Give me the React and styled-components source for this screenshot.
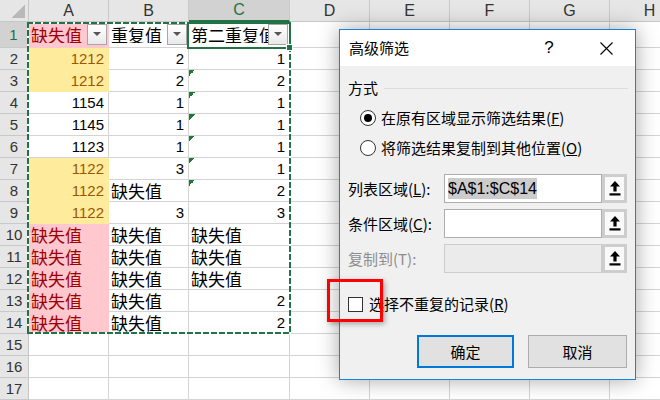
import React from 'react'
import styled, { createGlobalStyle, css } from 'styled-components'

const GlobalStyle = createGlobalStyle`
  html, body {
    margin: 0;
    padding: 0;
    background: #fff;
    overflow: hidden;
  }
  body {
    font-family: "Liberation Sans", "Noto Sans CJK SC", sans-serif;
  }
`

const fills = {
  pink: { bg: '#ffc7ce', fg: '#9c0006' },
  yellow: { bg: '#ffeb9c', fg: '#9c5700' },
}

const GREEN = '#217346'

const Page = styled.div`
  position: relative;
  width: 660px;
  height: 400px;
  overflow: hidden;
`

const Sheet = styled.div`
  display: grid;
  grid-template-columns: 29px 80px 80px 101px 80px 80px 80px 80px 80px;
  grid-template-rows: 22px 26px repeat(16, 22px);
`

const Corner = styled.div`
  grid-row: 1;
  grid-column: 1;
  box-sizing: border-box;
  background: #e6e6e6;
  border-right: 1px solid #c6c6c6;
  border-bottom: 1px solid #c6c6c6;
  display: flex;
  justify-content: flex-end;
  align-items: flex-end;
  padding: 0 3px 3px 0;

  &::after {
    content: '';
    width: 13px;
    height: 13px;
    background: linear-gradient(to top left, #b9b9b9 50%, transparent 50%);
  }
`

const ColHead = styled.div`
  grid-row: 1;
  grid-column: ${p => p.$c};
  box-sizing: border-box;
  background: ${p => (p.$active ? '#d2d2d2' : '#e6e6e6')};
  color: ${p => (p.$active ? GREEN : '#333')};
  border-right: 1px solid #c9c9c9;
  border-bottom: ${p => (p.$active ? `2px solid ${GREEN}` : '1px solid #c6c6c6')};
  font-size: 16px;
  line-height: 1;
  display: flex;
  align-items: center;
  justify-content: center;
`

const RowHead = styled.div`
  grid-row: ${p => p.$r};
  grid-column: 1;
  box-sizing: border-box;
  background: ${p => (p.$active ? '#d2d2d2' : '#e6e6e6')};
  color: ${p => (p.$active ? GREEN : '#333')};
  border-right: ${p => (p.$active ? `2px solid ${GREEN}` : '1px solid #c6c6c6')};
  border-bottom: 1px solid #c9c9c9;
  font-size: 15px;
  line-height: 1;
  display: flex;
  align-items: center;
  justify-content: center;
`

const Cell = styled.div`
  grid-row: ${p => p.$r};
  grid-column: ${p => p.$c};
  position: relative;
  box-sizing: border-box;
  min-width: 0;
  border-right: 1px solid ${p => (fills[p.$fill] ? fills[p.$fill].bg : '#d4d4d4')};
  border-bottom: 1px solid ${p => (fills[p.$fill] ? fills[p.$fill].bg : '#d4d4d4')};
  background: ${p => (fills[p.$fill] ? fills[p.$fill].bg : '#fff')};
  color: ${p => (fills[p.$fill] ? fills[p.$fill].fg : '#000')};
  display: flex;
  align-items: center;
  justify-content: ${p => (p.$num ? 'flex-end' : 'flex-start')};
  padding: ${p => (p.$head ? '0 0 0 2px' : '0 4px 0 2px')};
  white-space: nowrap;
  overflow: hidden;
  line-height: 1;
  font-family: ${p => (p.$num ? '"Liberation Sans", sans-serif' : '"Noto Sans CJK SC", sans-serif')};
  font-size: ${p => (p.$num ? '15px' : '17px')};

  ${p =>
    p.$tri &&
    css`
      &::before {
        content: '';
        position: absolute;
        left: 0;
        top: 0;
        width: 6px;
        height: 6px;
        background: linear-gradient(135deg, #1e7b34 50%, transparent 50%);
      }
    `}
`

const HeadLabel = styled.span`
  flex: 1;
  min-width: 0;
  overflow: hidden;
`

const DropBtn = styled.div`
  flex: none;
  width: 20px;
  height: 21px;
  margin: -1px 1px 0 0;
  box-sizing: border-box;
  border: 1px solid #a6a6a6;
  background: linear-gradient(#ffffff, #e9e9e9);
  display: flex;
  align-items: center;
  justify-content: center;

  &::after {
    content: '';
    border-left: 4px solid transparent;
    border-right: 4px solid transparent;
    border-top: 4px solid #555;
  }
`

const Marquee = styled.div`
  grid-row: 2 / 16;
  grid-column: 2 / 5;
  margin: 0 -1px 0 -2px;
  position: relative;
  z-index: 2;
  pointer-events: none;
  background:
    repeating-linear-gradient(90deg, ${GREEN} 0 6px, #fff 6px 8px) top / 100% 2px no-repeat,
    repeating-linear-gradient(90deg, ${GREEN} 0 6px, #fff 6px 8px) bottom / 100% 2px no-repeat,
    repeating-linear-gradient(180deg, ${GREEN} 0 6px, #fff 6px 8px) left / 2px 100% no-repeat,
    repeating-linear-gradient(180deg, ${GREEN} 0 6px, #fff 6px 8px) right / 2px 100% no-repeat;
`

const ActiveCell = styled.div`
  grid-row: 2;
  grid-column: 4;
  margin: 0 -1px -1px -2px;
  position: relative;
  z-index: 3;
  border: 2px solid ${GREEN};
  pointer-events: none;
`

const FillHandle = styled.div`
  position: absolute;
  right: -4px;
  bottom: -4px;
  width: 5px;
  height: 5px;
  background: ${GREEN};
  border: 1px solid #fff;
`

/* dialog */

const Dialog = styled.div`
  position: absolute;
  left: 339px;
  top: 29px;
  width: 297px;
  height: 351px;
  box-sizing: border-box;
  border: 1px solid #1883d7;
  background: #f0f0f0;
  box-shadow: 0 0 20px rgba(0, 0, 0, 0.35);
  display: flex;
  flex-direction: column;
  font-family: "Noto Sans CJK SC", "Liberation Sans", sans-serif;
  font-size: 15px;
  line-height: 1.2;
  color: #000;
  z-index: 5;
`

const TitleBar = styled.div`
  height: 36px;
  flex: none;
  background: #fff;
  display: flex;
  align-items: center;
  padding-left: 9px;
`

const Title = styled.div`
  flex: 1;
`

const TitleBtn = styled.div`
  width: ${p => p.$w}px;
  margin-right: ${p => p.$mr}px;
  display: flex;
  justify-content: center;
  align-items: center;
  font-family: "Liberation Sans", sans-serif;
  font-size: 17px;
`

const Body = styled.div`
  display: flex;
  flex-direction: column;
  padding: 0 8px 0 8px;
`

const GroupHead = styled.div`
  margin-top: 12px;
  height: 20px;
  display: flex;
  align-items: center;

  &::after {
    content: '';
    flex: 1;
    height: 1px;
    margin: 0 -1px 0 6px;
    background: #dcdcdc;
  }
`

const RadioRow = styled.div`
  height: 30px;
  margin-left: 12px;
  margin-top: ${p => p.$mt || 0}px;
  display: flex;
  align-items: center;
  gap: 5px;
`

const RadioDot = styled.div`
  width: 16px;
  height: 16px;
  box-sizing: border-box;
  border-radius: 50%;
  border: 1px solid #333;
  background: #fff;
  display: flex;
  align-items: center;
  justify-content: center;

  ${p =>
    p.$on &&
    css`
      &::after {
        content: '';
        width: 8px;
        height: 8px;
        border-radius: 50%;
        background: #000;
      }
    `}
`

const FieldRow = styled.div`
  height: 29px;
  margin-top: ${p => p.$mt}px;
  display: flex;
  align-items: center;
`

const FieldLabel = styled.div`
  width: 96px;
  color: ${p => (p.$disabled ? '#8d8d8d' : '#000')};
`

const FieldInput = styled.div`
  width: 158px;
  height: 29px;
  box-sizing: border-box;
  border: 1px solid ${p => (p.$disabled ? '#cccccc' : '#adadad')};
  background: ${p => (p.$disabled ? '#ebebeb' : '#fff')};
  display: flex;
  align-items: center;
  padding-left: 3px;
  font-family: "Liberation Sans", sans-serif;
  font-size: 16px;
`

const Selected = styled.span`
  background: #cccccc;
  padding: 1px 0;
`

const PickBtn = styled.div`
  width: 25px;
  height: 29px;
  box-sizing: border-box;
  border: 3px solid #cdcdcd;
  background: #f9f9f9;
  display: flex;
  align-items: center;
  justify-content: center;
`

const CheckRow = styled.div`
  height: 20px;
  margin-top: 21px;
  display: flex;
  align-items: center;
  gap: 6px;
`

const CheckBox = styled.div`
  width: 15px;
  height: 15px;
  box-sizing: border-box;
  border: 1px solid #333;
  background: #fff;
`

const ButtonRow = styled.div`
  margin-top: 21px;
  display: flex;
  justify-content: flex-end;
  gap: 14px;
`

const Button = styled.div`
  width: ${p => p.$w}px;
  height: 33px;
  box-sizing: border-box;
  background: #e1e1e1;
  border: ${p => (p.$primary ? '2px solid #0078d7' : '1px solid #adadad')};
  display: flex;
  align-items: center;
  justify-content: center;
`

const Callout = styled.div`
  position: absolute;
  left: 327px;
  top: 279px;
  width: 56px;
  height: 43px;
  box-sizing: border-box;
  border: 3px solid #ff0000;
  box-shadow: 2px 2px 5px rgba(0, 0, 0, 0.3);
  z-index: 6;
`

const CloseIcon = () => (
  <svg width="13" height="13" viewBox="0 0 13 13">
    <path d="M0.5 0.5 L12.5 12.5 M12.5 0.5 L0.5 12.5" stroke="#000" strokeWidth="1.1" fill="none" />
  </svg>
)

const PickIcon = () => (
  <svg width="12" height="15" viewBox="0 0 12 15">
    <polygon points="6,0 11,5.5 7.6,5.5 7.6,10.5 4.4,10.5 4.4,5.5 1,5.5" fill="#000" />
    <rect x="0.5" y="12.3" width="11" height="2.2" fill="#000" />
  </svg>
)

const n = (v, extra) => ({ v, num: true, ...extra })
const t = (v, extra) => ({ v, ...extra })
const miss = extra => t('缺失值', extra)

const colA = [
  n('1212', { fill: 'yellow' }), n('1212', { fill: 'yellow' }), n('1154'), n('1145'), n('1123'),
  n('1122', { fill: 'yellow' }), n('1122', { fill: 'yellow' }), n('1122', { fill: 'yellow' }),
  miss({ fill: 'pink' }), miss({ fill: 'pink' }), miss({ fill: 'pink' }), miss({ fill: 'pink' }), miss({ fill: 'pink' }),
]
const colB = [
  n('2'), n('2'), n('1'), n('1'), n('1'), n('3'), miss(), n('3'),
  miss(), miss(), miss(), miss(), miss(),
]
const colC = [
  n('1'), n('2', { tri: true }), n('1', { tri: true }), n('1', { tri: true }), n('1', { tri: true }),
  n('1', { tri: true }), n('2', { tri: true }), n('3'),
  miss(), miss(), miss(), n('2'), n('2'),
]

const columns = ['A', 'B', 'C', 'D', 'E', 'F', 'G', 'H']
const headers = [
  { v: '缺失值', fill: 'pink' },
  { v: '重复值' },
  { v: '第二重复值' },
]

const App = () => {
  const cells = []
  // header row (sheet row 1)
  headers.forEach((h, i) => {
    cells.push(
      <Cell key={`h${i}`} $r={2} $c={i + 2} $fill={h.fill} $head>
        <HeadLabel>{h.v}</HeadLabel>
        <DropBtn />
      </Cell>
    )
  })
  ;[colA, colB, colC].forEach((col, ci) => {
    col.forEach((d, ri) => {
      cells.push(
        <Cell key={`c${ci}-${ri}`} $r={ri + 3} $c={ci + 2} $fill={d.fill} $num={d.num} $tri={d.tri}>
          {d.v}
        </Cell>
      )
    })
    for (let r = 15; r <= 17; r++) {
      cells.push(<Cell key={`e${ci}-${r}`} $r={r + 1} $c={ci + 2} />)
    }
  })
  for (let c = 5; c <= 9; c++) {
    for (let r = 1; r <= 17; r++) {
      cells.push(<Cell key={`x${c}-${r}`} $r={r + 1} $c={c} />)
    }
  }

  return (
    <Page>
      <GlobalStyle />
      <Sheet>
        <Corner />
        {columns.map((c, i) => (
          <ColHead key={c} $c={i + 2} $active={c === 'C'}>{c}</ColHead>
        ))}
        {Array.from({ length: 17 }, (_, i) => (
          <RowHead key={i} $r={i + 2} $active={i === 0}>{i + 1}</RowHead>
        ))}
        {cells}
        <Marquee />
        <ActiveCell>
          <FillHandle />
        </ActiveCell>
      </Sheet>

      <Dialog>
        <TitleBar>
          <Title>高级筛选</Title>
          <TitleBtn $w={40} $mr={16}>?</TitleBtn>
          <TitleBtn $w={42} $mr={8}><CloseIcon /></TitleBtn>
        </TitleBar>
        <Body>
          <GroupHead>方式</GroupHead>
          <RadioRow $mt={5}>
            <RadioDot $on />
            <span>在原有区域显示筛选结果(<u>F</u>)</span>
          </RadioRow>
          <RadioRow>
            <RadioDot />
            <span>将筛选结果复制到其他位置(<u>O</u>)</span>
          </RadioRow>
          <FieldRow $mt={11}>
            <FieldLabel>列表区域(<u>L</u>):</FieldLabel>
            <FieldInput><Selected>$A$1:$C$14</Selected></FieldInput>
            <PickBtn><PickIcon /></PickBtn>
          </FieldRow>
          <FieldRow $mt={6}>
            <FieldLabel>条件区域(<u>C</u>):</FieldLabel>
            <FieldInput />
            <PickBtn><PickIcon /></PickBtn>
          </FieldRow>
          <FieldRow $mt={6}>
            <FieldLabel $disabled>复制到(T):</FieldLabel>
            <FieldInput $disabled />
            <PickBtn><PickIcon /></PickBtn>
          </FieldRow>
          <CheckRow>
            <CheckBox />
            <span>选择不重复的记录(<u>R</u>)</span>
          </CheckRow>
          <ButtonRow>
            <Button $primary $w={97}>确定</Button>
            <Button $w={99}>取消</Button>
          </ButtonRow>
        </Body>
      </Dialog>
      <Callout />
    </Page>
  )
}

export default App
